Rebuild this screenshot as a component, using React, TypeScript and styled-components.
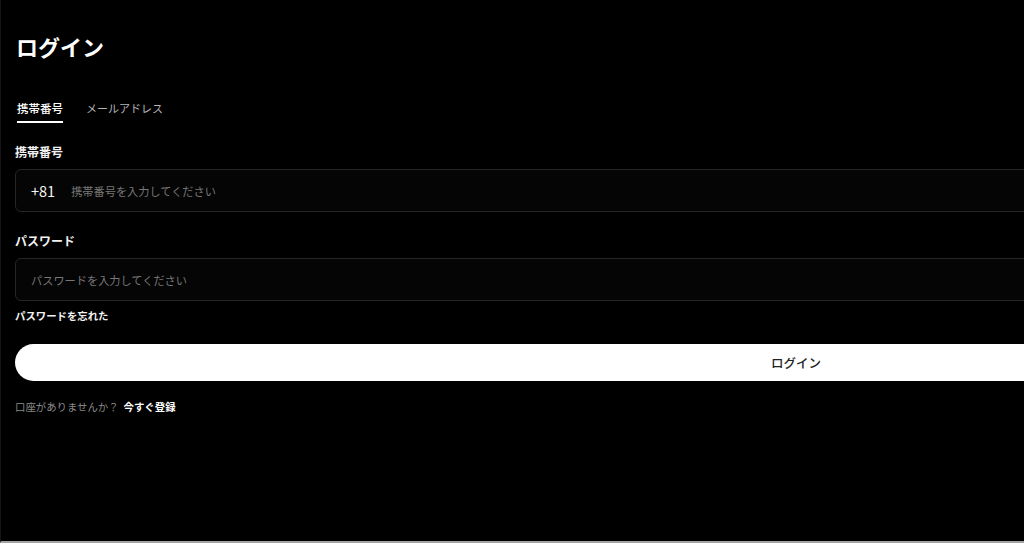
import React, { useState } from 'react';
import styled, { createGlobalStyle } from 'styled-components';

const GlobalStyle = createGlobalStyle`
  html, body {
    margin: 0;
    padding: 0;
    background: #000;
    overflow: hidden;
  }
  * {
    box-sizing: border-box;
  }
`;

const FONT = `"Noto Sans CJK JP", "Noto Sans", sans-serif`;

function App() {
  const [tab, setTab] = useState<'phone' | 'mail'>('phone');

  return (
    <>
      <GlobalStyle />
      <Page>
        <Form>
          <Title>ログイン</Title>
          <Tabs>
            <Tab $active={tab === 'phone'} onClick={() => setTab('phone')}>
              携帯番号
            </Tab>
            <Tab $active={tab === 'mail'} onClick={() => setTab('mail')}>
              メールアドレス
            </Tab>
          </Tabs>

          <Label>携帯番号</Label>
          <Field>
            <Prefix>+81</Prefix>
            <Input placeholder="携帯番号を入力してください" />
          </Field>

          <Label>パスワード</Label>
          <Field>
            <Input type="password" placeholder="パスワードを入力してください" />
          </Field>

          <Forgot>パスワードを忘れた</Forgot>

          <SubmitButton>ログイン</SubmitButton>

          <Footer>
            口座がありませんか？<RegisterLink>今すぐ登録</RegisterLink>
          </Footer>
        </Form>
      </Page>
    </>
  );
}

const Page = styled.div`
  height: 100vh;
  background: #000;
  border-left: 1px solid #151515;
  border-bottom: 2px solid #a3a3a3;
  padding: 31px 0 0 14px;
  overflow: hidden;
  font-family: ${FONT};
`;

const Form = styled.div`
  width: 1562px;
  display: flex;
  flex-direction: column;
`;

const Title = styled.h1`
  margin: 0 0 37px 1px;
  font-size: 22px;
  line-height: 30px;
  font-weight: 700;
  color: #fff;
`;

const Tabs = styled.div`
  display: flex;
  gap: 23px;
  padding-left: 2px;
`;

const Tab = styled.div<{ $active: boolean }>`
  font-size: ${(p) => (p.$active ? '11.5px' : '11px')};
  line-height: 20px;
  padding-bottom: 3px;
  border-bottom: 2px solid ${(p) => (p.$active ? '#fff' : 'transparent')};
  color: ${(p) => (p.$active ? '#fff' : '#b5b5b5')};
  font-weight: ${(p) => (p.$active ? 500 : 400)};
  cursor: pointer;
`;

const Label = styled.div`
  margin-top: 19px;
  font-size: 12px;
  line-height: 20px;
  font-weight: 700;
  color: #f2f2f2;
`;

const Field = styled.div`
  margin-top: 7px;
  height: 43px;
  display: flex;
  align-items: center;
  gap: 16px;
  padding: 0 15px;
  border: 1px solid #262626;
  border-radius: 6px;
  background: #050505;
`;

const Prefix = styled.span`
  font-size: 14.5px;
  color: #f5f5f5;
`;

const Input = styled.input`
  flex: 1;
  border: none;
  outline: none;
  background: transparent;
  color: #fff;
  font-family: ${FONT};
  font-size: 11.2px;
  padding: 0;

  &::placeholder {
    color: #777;
  }
`;

const Forgot = styled.div`
  margin-top: 7px;
  font-size: 10.4px;
  line-height: 16px;
  font-weight: 700;
  color: #f2f2f2;
  cursor: pointer;
`;

const SubmitButton = styled.button`
  margin-top: 20px;
  height: 37px;
  border: none;
  border-radius: 19px;
  background: #fff;
  color: #222;
  font-family: ${FONT};
  font-size: 12.5px;
  font-weight: 500;
  cursor: pointer;
`;

const Footer = styled.div`
  margin-top: 16px;
  font-size: 10.4px;
  line-height: 20px;
  color: #8a8a8a;
`;

const RegisterLink = styled.span`
  margin-left: 5px;
  color: #fff;
  font-weight: 700;
  cursor: pointer;
`;

export default App;
